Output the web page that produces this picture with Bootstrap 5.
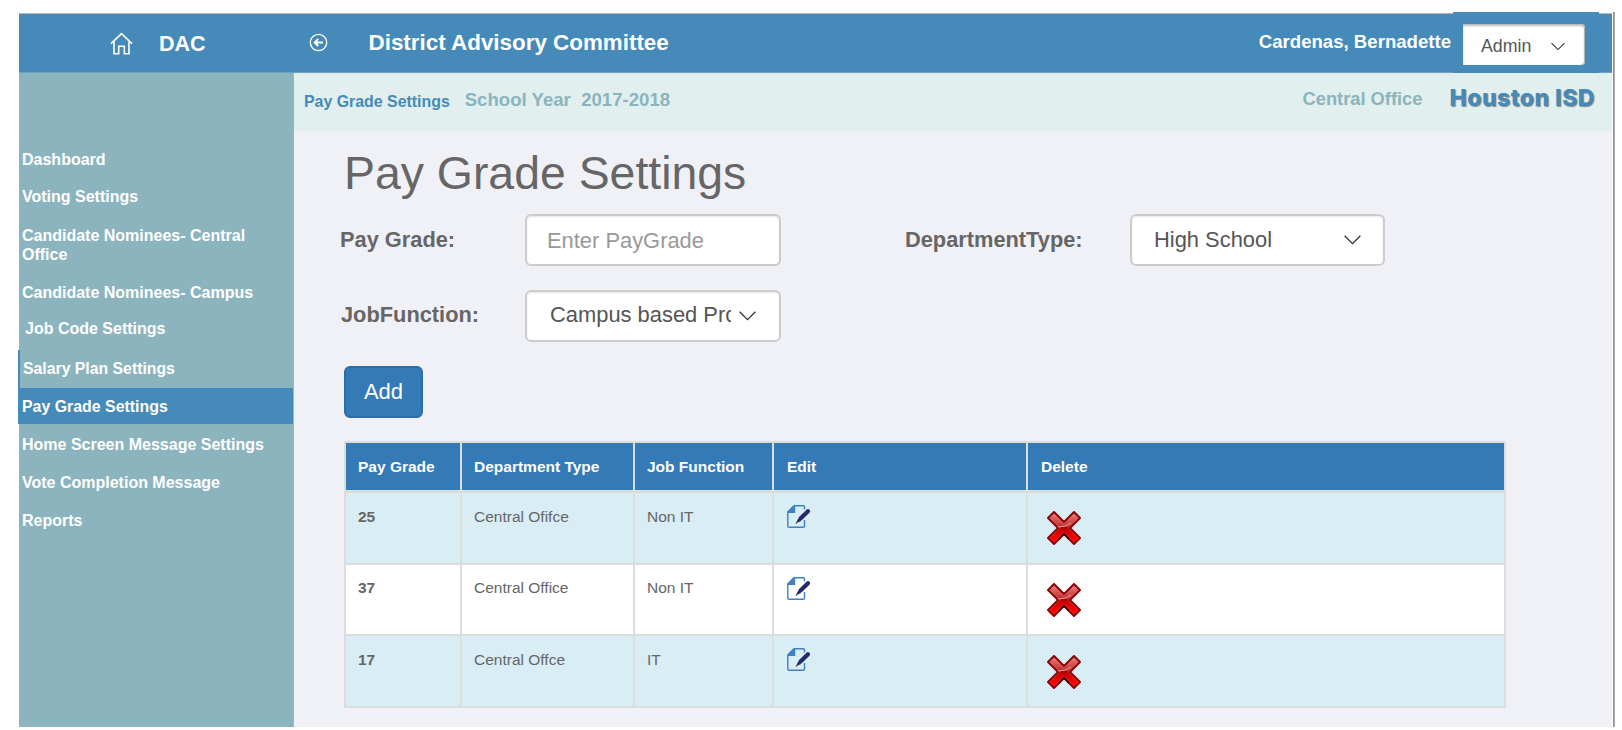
<!DOCTYPE html>
<html lang="en">
<head>
<meta charset="utf-8">
<meta name="viewport" content="width=device-width, initial-scale=1">
<title>Pay Grade Settings</title>
<link rel="stylesheet" href="https://cdn.jsdelivr.net/npm/bootstrap@5.3.0/dist/css/bootstrap.min.css">
<style>
body{font-family:"Liberation Sans",Arial,sans-serif;background:#fff;color:#666;overflow:hidden}
.page-frame{margin:12px 7px 3px 18px;width:1597px;height:715px}
.frame-body{width:1595px;padding-left:1px}
.frame-edge{width:2px;background:linear-gradient(90deg,#8f8f8f 50%,#ababab 50%)}
.topbar{height:61px;color:#fff;font-weight:700;padding-top:2px;background:linear-gradient(#fff 0 1px,#b8babf 1px 2px,#458ab8 2px 60px,#6ba2c6 60px);width:1593px}
.brand{width:275px;font-size:21.5px;padding-left:91px}
.brand span{margin-left:26px;line-height:61px}
.app-title{font-size:22.4px;margin-left:40.500px;line-height:58px}
.user-name{font-size:18.6px;line-height:55px;margin-right:2px}
.role-box{width:146px;height:61px;background:#458ab8;margin-top:-2px;margin-right:13px;padding:12px 0 0 10px}
.role-pick{width:122px;height:41px;background:#fff;color:#555;font-weight:400;font-size:17.800px;border-radius:0 4px 4px 0;padding:4px 20px 0 18px;box-shadow:inset 0 2px 2px #bbb,inset -1px 0 1px #aaa}
.side{width:275px;background:#8bb4be;border-right:1px solid #97b9c4;padding-top:77px;height:654px}
.side a{display:block;color:#fff;font-weight:700;font-size:16px;line-height:19px;text-decoration:none;padding-left:3px;padding-right:20px}
.side a.active{background:#458ab8;height:36px;padding:9px 0 0 4px;margin-left:-1px;font-size:15.9px}
.side a.rail{border-left:2px solid #458ab8;margin-left:-1px;height:38px;padding-top:9px;font-size:15.8px}
.content-area{width:1318px;background:#f0f1f7}
.crumbs{height:58px;background:#e1efee;color:#8bb4be;font-weight:700;padding:0 17px 0 10px}
.crumb-page{font-size:15.9px;color:#458ab8;line-height:57px}
.crumb-year{font-size:18.6px;margin-left:15px;line-height:53px;white-space:pre}
.office{font-size:18.3px;line-height:52px}
.district{font-family:Inter,sans-serif;font-weight:800;font-size:23px;letter-spacing:.5px;color:#458ab8;text-shadow:1px 1px 1px #888;margin-left:27px;line-height:50px}
.panel-body{padding:0 0 0 46px}
h1{font-size:46.4px;line-height:54px;margin:15px 0 0 4px;font-weight:400;color:#666}
.field-row{height:52px;font-size:21.8px}
.field-label{font-weight:700;color:#666}
.form-control{height:52px;border:2px solid #ccc;border-radius:6px;font-size:21.900px;color:#555;background:#fff;box-shadow:inset 0 1px 2px rgba(0,0,0,.1);padding:0 22px}
.form-control::placeholder{color:#999;opacity:1}
.pick-text{white-space:nowrap;overflow:hidden}
.btn-add{width:79px;height:52px;background:#337ab7;border:2px solid #2e6da4;border-radius:6px;color:#fff;font-size:22px;padding:0 0 2px;margin:24px 0 0 4px;display:block}
.grades{width:1162px;table-layout:fixed;border-collapse:separate;border-spacing:0;border:0 solid #ddd;border-width:2px 0 0 2px;margin:23px 0 0 4px;font-size:15.5px;color:#666}
.grades th,.grades td{border:0 solid #ddd;border-width:0 2px 2px 0;padding:14px 0 0 12px;vertical-align:top;line-height:19px}
.grades thead th{background:#337ab7;color:#fff;border-bottom-width:3px;height:50px}
.grades thead th:nth-child(n+4){padding-left:13px}
.grades tbody tr{height:72px}
.grades tbody tr:nth-child(2){height:71px}
.grades tbody tr:nth-child(odd)>*{background:#d9edf5}
.grades tbody tr:nth-child(even)>*{background:#fff;padding-top:13px}
.grades svg{display:block}
.grades tbody td.edit-cell{padding:12px 0 0 13px}
.grades tbody td.del-cell{padding:18px 0 0 19px}
.grades tbody tr:last-child td.edit-cell{padding-top:12px}
.grades tbody tr:last-child td.del-cell{padding-top:19px}
</style>
</head>
<body>
<svg width="0" height="0" class="position-absolute">
<defs>
<linearGradient id="redTop" x1="0" y1="0" x2="0" y2="1"><stop offset="0" stop-color="#e88"/><stop offset=".46" stop-color="#c32828"/><stop offset=".48" stop-color="#b00000"/><stop offset=".8" stop-color="#f00"/><stop offset="1" stop-color="#e00000"/></linearGradient>
<symbol id="ic-edit" viewBox="0 0 24 24"><path d="M17.500 4.500V2Q17.500.8 16.300.8H7L.8 7v13.900Q.8 22.300 2.200 22.300h14.100q1.200 0 1.200-1.200V15" fill="none" stroke="#3f80c6" stroke-width="1.4"/><path d="M8.200.6V8H.6V6.600L6.800.6z" fill="#3f80c6"/><path d="M21 6.200 13.500 13.600" stroke="#252a69" stroke-width="4.200" stroke-linecap="round"/><path d="m11.200 13.400 3 2.600-3 1.300-2.800 2z" fill="#252a69"/></symbol>
<symbol id="ic-del" viewBox="0 0 34 34"><path d="M7 1 17 11 27 1 33 7 23 17 33 27 27 33 17 23 7 33 1 27 11 17 1 7z" fill="url(#redTop)" stroke="#8d0808" stroke-width="2" stroke-linejoin="round"/><path d="M7 3.200 17 13.200 27 3.200 30.800 7 20.800 17 30.800 27 27 30.800 17 20.800 7 30.800 3.200 27 13.200 17 3.200 7z" fill="none" stroke="#e0806c" stroke-width=".6" stroke-dasharray="1.500 .8"/><path d="M11 16q8 0 13-4" fill="none" stroke="#eab0b0" stroke-width=".9"/><path d="m12 28 5-5.500 5 5.500" fill="none" stroke="#400" stroke-width="1.600"/></symbol>
<symbol id="ic-chev" viewBox="0 0 17 10"><path d="m.6.8 7.900 7.900L16.400.8" fill="none" stroke="#333" stroke-width="1.300"/></symbol>
</defs>
</svg>
<div class="page-frame d-flex">
  <div class="frame-body">
    <header class="topbar d-flex">
      <div class="brand d-flex">
        <svg width="23" height="23" viewBox="0 0 23 23" style="margin-top:18px" fill="none" stroke="#fff" stroke-width="1.600"><path d="M1 11.700 11.500 1.600 22 11.700M4 9.500v12.200h4.700v-7.500h5.600v7.500H19V9.500"/></svg>
        <span>DAC</span>
      </div>
      <svg width="19" height="19" viewBox="0 0 19 19" style="margin:19px 0 0 15px" fill="none" stroke="#fff"><circle cx="9.500" cy="9.500" r="8.200" stroke-width="1.300"/><path d="M14 9.500H6M9.200 6 5.700 9.500 9.200 13" stroke-width="1.900"/></svg>
      <div class="app-title">District Advisory Committee</div>
      <div class="user-name ms-auto">Cardenas, Bernadette</div>
      <div class="role-box">
        <div class="role-pick d-flex align-items-center justify-content-between"><span>Admin</span><svg width="14" height="9"><use href="#ic-chev"/></svg></div>
      </div>
    </header>
    <div class="d-flex">
      <nav class="side">
        <a href="#">Dashboard</a>
        <a href="#" style="margin-top:18px">Voting Settings</a>
        <a href="#" style="margin-top:20px">Candidate Nominees- Central Office</a>
        <a href="#" style="margin-top:19px">Candidate Nominees- Campus</a>
        <a href="#" style="margin-top:17px;padding-left:6px">Job Code Settings</a>
        <a href="#" class="rail" style="margin-top:12px">Salary Plan Settings</a>
        <a href="#" class="active">Pay Grade Settings</a>
        <a href="#" style="margin-top:11px">Home Screen Message Settings</a>
        <a href="#" style="margin-top:19px">Vote Completion Message</a>
        <a href="#" style="margin-top:19px">Reports</a>
      </nav>
      <main class="content-area">
        <div class="crumbs d-flex">
          <span class="crumb-page">Pay Grade Settings</span>
          <span class="crumb-year">School Year  2017-2018</span>
          <span class="office ms-auto">Central Office</span>
          <span class="district">Houston ISD</span>
        </div>
        <div class="panel-body">
          <h1>Pay Grade Settings</h1>
          <div class="field-row d-flex align-items-center" style="margin-top:14px">
            <label class="field-label" style="width:185px">Pay Grade:</label>
            <input class="form-control" style="width:256px;padding:2px 20px 0" placeholder="Enter PayGrade">
            <label class="field-label" style="width:225px;margin-left:124px">DepartmentType:</label>
            <div class="form-control d-flex align-items-center justify-content-between" style="width:255px"><span class="pick-text">High School</span><svg width="17" height="10"><use href="#ic-chev"/></svg></div>
          </div>
          <div class="field-row d-flex align-items-center" style="margin-top:24px">
            <label class="field-label" style="width:185px;padding:0 0 2px 1px">JobFunction:</label>
            <div class="form-control d-flex align-items-center justify-content-between" style="width:256px;padding:0 23px 1px"><span class="pick-text" style="width:181px">Campus based Professional</span><svg width="17" height="10"><use href="#ic-chev"/></svg></div>
          </div>
          <button class="btn btn-add" type="button">Add</button>
          <table class="grades">
            <colgroup><col style="width:116px"><col style="width:173px"><col style="width:139px"><col style="width:254px"><col></colgroup>
            <thead><tr><th>Pay Grade</th><th>Department Type</th><th>Job Function</th><th>Edit</th><th>Delete</th></tr></thead>
            <tbody>
              <tr><th>25</th><td>Central Ofifce</td><td>Non IT</td><td class="edit-cell"><svg width="24" height="24"><use href="#ic-edit"/></svg></td><td class="del-cell"><svg width="34" height="34"><use href="#ic-del"/></svg></td></tr>
              <tr><th>37</th><td>Central Office</td><td>Non IT</td><td class="edit-cell"><svg width="24" height="24"><use href="#ic-edit"/></svg></td><td class="del-cell"><svg width="34" height="34"><use href="#ic-del"/></svg></td></tr>
              <tr><th>17</th><td>Central Offce</td><td>IT</td><td class="edit-cell"><svg width="24" height="24"><use href="#ic-edit"/></svg></td><td class="del-cell"><svg width="34" height="34"><use href="#ic-del"/></svg></td></tr>
            </tbody>
          </table>
        </div>
      </main>
    </div>
  </div>
  <div class="frame-edge"></div>
</div>
<script src="https://cdn.jsdelivr.net/npm/bootstrap@5.3.0/dist/js/bootstrap.bundle.min.js"></script>
</body>
</html>
